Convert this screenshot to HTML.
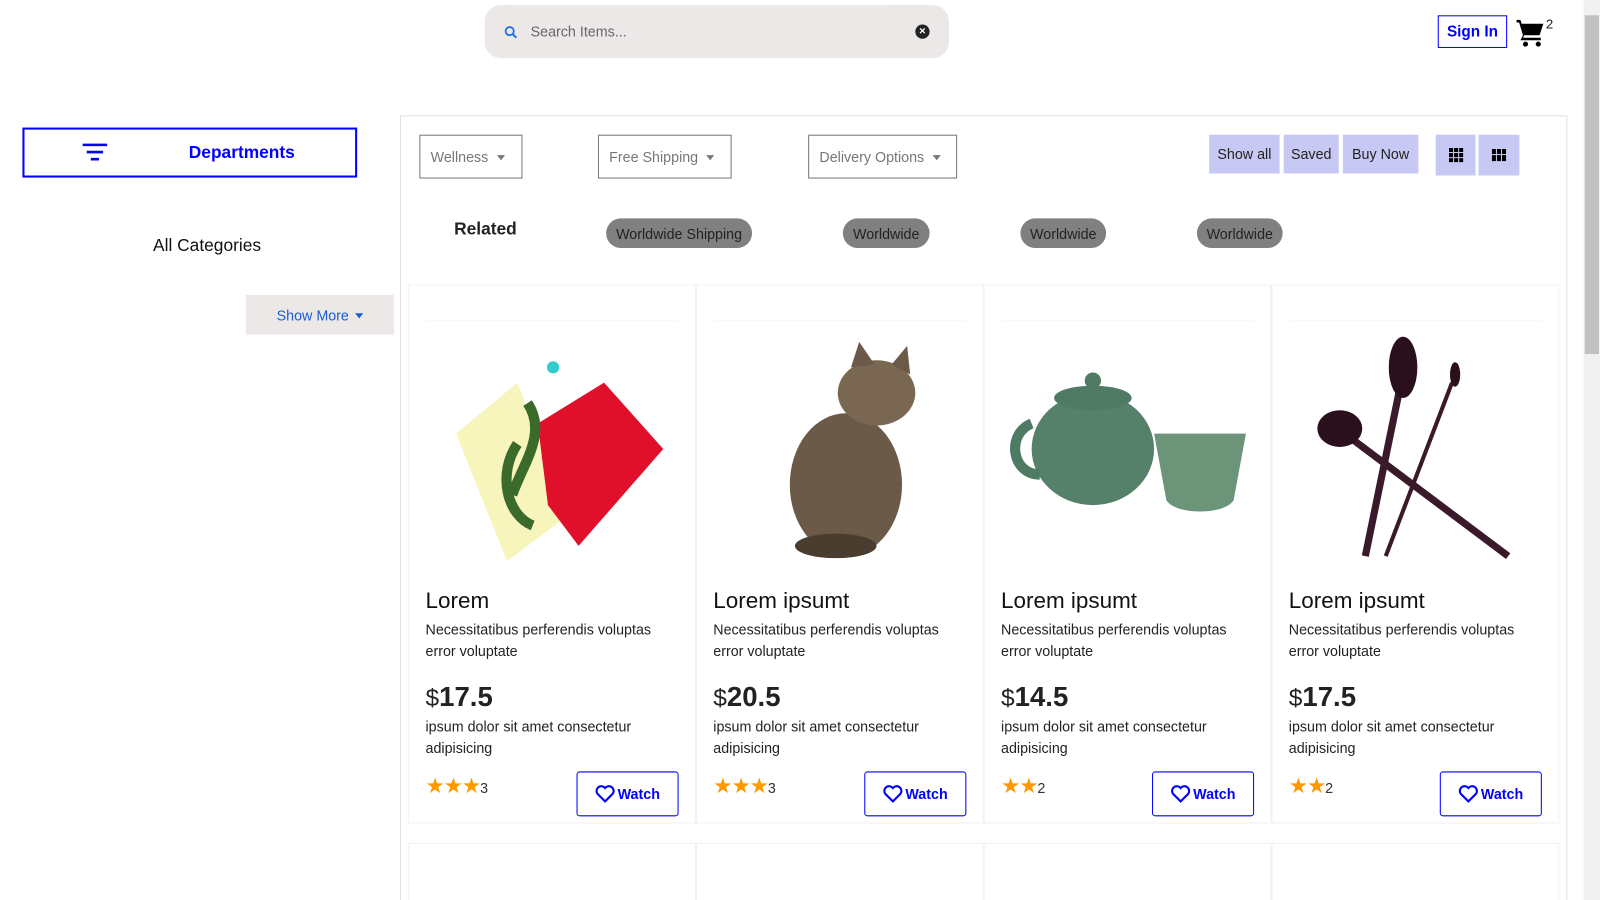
<!DOCTYPE html>
<html><head><meta charset="utf-8"><style>
*{box-sizing:border-box;margin:0;padding:0}
body{width:1600px;height:900px;overflow:hidden;background:#fff;font-family:"Liberation Sans",sans-serif;color:#222;position:relative}
#wrap{position:absolute;left:0;top:0;width:1568px;height:882px;overflow:hidden;transform:scale(1.020408);transform-origin:0 0}
.abs{position:absolute}
.search{left:475px;top:5px;width:455px;height:52px;background:#ece8e7;border-radius:16px}
.sel{top:132px;height:43px;border:1px solid #777;color:#777;font-size:14px;padding:0 10px;display:flex;align-items:center}
.sel:after{content:"";border:4px solid transparent;border-top:5px solid #777;margin-left:8px;margin-top:5px}
.pb{top:132px;height:38px;background:#c8c8f4;font-size:14px;display:flex;align-items:center;justify-content:center;color:#222}
.chip{top:214px;height:29px;background:#808080;border-radius:15px;font-size:14px;color:#222;display:flex;align-items:center;justify-content:center}
.card{width:282px;height:528px;border:1px solid #f6eef0;top:279px}
.card .img{position:absolute;left:16px;top:34px;width:248px;height:248px;overflow:hidden;border-top:1px solid #f3f3f3}
.card h3{position:absolute;left:16px;top:296px;font-size:22px;font-weight:normal;color:#111}
.card .d{position:absolute;left:16px;top:327px;font-size:14px;line-height:21px;width:240px;color:#222}
.card .p{position:absolute;left:16px;top:388px;font-size:27px;font-weight:bold}
.card .p span{font-weight:normal;font-size:24px}
.card .d2{position:absolute;left:16px;top:422px;font-size:14px;line-height:21px;width:240px}
.card .st{position:absolute;left:16px;top:478px;color:#f90;font-size:21px;letter-spacing:-1px}
.card .st b{font-weight:normal;color:#333;font-size:14px;letter-spacing:0}
.card .w{position:absolute;left:164px;top:476px;width:100px;height:44px;border:1.5px solid #00f;border-radius:3px;color:#00f;font-size:14px;font-weight:bold;display:flex;align-items:center;justify-content:center;gap:2px}
.card2{width:282px;height:120px;border:1px solid #f6eef0;top:826px}
</style></head><body><div id="wrap">
<div class="abs search">
<svg class="abs" style="left:19px;top:20px" width="14" height="14" viewBox="0 0 14 14"><circle cx="5.5" cy="5.5" r="4" fill="none" stroke="#1a73e8" stroke-width="1.8"/><path d="M8.5 8.5L12 12" stroke="#1a73e8" stroke-width="2"/></svg>
<div class="abs" style="left:45px;top:18px;font-size:14px;color:#666">Search Items...</div>
<div class="abs" style="left:422px;top:19px;width:14px;height:14px;border-radius:7px;background:#222;color:#fff;font-size:11px;line-height:14px;text-align:center;font-weight:bold">×</div>
</div>
<div class="abs" style="left:1409px;top:15px;width:68px;height:32px;border:1.5px solid #00f;color:#00f;font-weight:bold;font-size:15px;display:flex;align-items:center;justify-content:center">Sign In</div>
<svg class="abs" style="left:1485px;top:17px" width="30" height="30" viewBox="0 0 24 24"><path d="M1 2h3l1 3h17l-3 9H7l-1 2h14v2H4l2-4L3 4H1z" fill="#000"/><circle cx="8" cy="21" r="2" fill="#000"/><circle cx="18" cy="21" r="2" fill="#000"/></svg>
<div class="abs" style="left:1515px;top:16px;font-size:13px">2</div>

<div class="abs" style="left:22px;top:125px;width:328px;height:49px;border:2px solid #00f"></div>
<svg class="abs" style="left:80px;top:140px" width="26" height="20"><path d="M1 2h24M5 9h16M9 16h8" stroke="#00f" stroke-width="2.5"/></svg>
<div class="abs" style="left:185px;top:140px;font-size:17px;color:#00f;font-weight:bold">Departments</div>
<div class="abs" style="left:150px;top:231px;font-size:17px;color:#111">All Categories</div>
<div class="abs" style="left:241px;top:289px;width:145px;height:39px;background:#ece8e7;color:#1a5bd4;font-size:14px;display:flex;align-items:center;justify-content:center">Show More <span style="margin-left:6px;border:4px solid transparent;border-top:5px solid #1a5bd4;margin-top:5px"></span></div>

<div class="abs" style="left:392px;top:113px;width:1144px;height:800px;border:1px solid #e0e0e0"></div>
<div class="abs sel" style="left:411px;width:101px">Wellness</div>
<div class="abs sel" style="left:586px;width:131px">Free Shipping</div>
<div class="abs sel" style="left:792px;width:146px">Delivery Options</div>
<div class="abs pb" style="left:1185px;width:69px">Show all</div>
<div class="abs pb" style="left:1258px;width:54px">Saved</div>
<div class="abs pb" style="left:1316px;width:74px">Buy Now</div>
<div class="abs pb" style="left:1407px;width:39px;height:40px"><svg width="14" height="14"><g fill="#000"><rect x="0" y="0" width="4" height="4"/><rect x="5" y="0" width="4" height="4"/><rect x="10" y="0" width="4" height="4"/><rect x="0" y="5" width="4" height="4"/><rect x="5" y="5" width="4" height="4"/><rect x="10" y="5" width="4" height="4"/><rect x="0" y="10" width="4" height="4"/><rect x="5" y="10" width="4" height="4"/><rect x="10" y="10" width="4" height="4"/></g></svg></div>
<div class="abs pb" style="left:1449px;width:40px;height:40px"><svg width="14" height="12"><g fill="#000"><rect x="0" y="0" width="4" height="5"/><rect x="5" y="0" width="4" height="5"/><rect x="10" y="0" width="4" height="5"/><rect x="0" y="6" width="4" height="6"/><rect x="5" y="6" width="4" height="6"/><rect x="10" y="6" width="4" height="6"/></g></svg></div>
<div class="abs" style="left:445px;top:215px;font-size:17px;font-weight:bold;color:#222">Related</div>
<div class="abs chip" style="left:594px;width:143px">Worldwide Shipping</div>
<div class="abs chip" style="left:826px;width:85px">Worldwide</div>
<div class="abs chip" style="left:1000px;width:84px">Worldwide</div>
<div class="abs chip" style="left:1173px;width:84px">Worldwide</div>

<div class="abs card" style="left:400px"><div class="img"><svg width="248" height="248"><path d="M30 110 L90 60 L140 190 L80 235 Z" fill="#f4f0a0" opacity=".7"/><path d="M110 100 L175 60 L233 125 L150 220 L120 180 Z" fill="#e0102a"/><path d="M90 120 C70 150 80 190 105 200 M100 80 C120 110 95 140 85 170" stroke="#3a6b2a" stroke-width="10" fill="none"/><circle cx="125" cy="45" r="6" fill="#3cc"/></svg></div><h3>Lorem</h3><div class="d">Necessitatibus perferendis voluptas error voluptate</div><div class="p"><span>$</span>17.5</div><div class="d2">ipsum dolor sit amet consectetur adipisicing</div><div class="st">★★★<b>3</b></div><div class="w"><svg width="20" height="18" viewBox="0 0 24 22"><path d="M12 20L3 11a5 5 0 0 1 9-7 5 5 0 0 1 9 7z" fill="none" stroke="#00f" stroke-width="2.5"/></svg>Watch</div></div>
<div class="abs card" style="left:682px"><div class="img"><svg width="248" height="248"><ellipse cx="130" cy="160" rx="55" ry="70" fill="#6b5a48"/><ellipse cx="160" cy="70" rx="38" ry="32" fill="#7a6752"/><path d="M135 45l8-25 15 22zM175 42l15-18 3 28z" fill="#6b5a48"/><ellipse cx="120" cy="220" rx="40" ry="12" fill="#4a3d30"/></svg></div><h3>Lorem ipsumt</h3><div class="d">Necessitatibus perferendis voluptas error voluptate</div><div class="p"><span>$</span>20.5</div><div class="d2">ipsum dolor sit amet consectetur adipisicing</div><div class="st">★★★<b>3</b></div><div class="w"><svg width="20" height="18" viewBox="0 0 24 22"><path d="M12 20L3 11a5 5 0 0 1 9-7 5 5 0 0 1 9 7z" fill="none" stroke="#00f" stroke-width="2.5"/></svg>Watch</div></div>
<div class="abs card" style="left:964px"><div class="img"><svg width="248" height="248"><ellipse cx="90" cy="125" rx="60" ry="55" fill="#55806a"/><ellipse cx="90" cy="75" rx="38" ry="12" fill="#4f7a63"/><circle cx="90" cy="58" r="8" fill="#4f7a63"/><path d="M30 100 C5 110 10 150 38 150" stroke="#4f7a63" stroke-width="10" fill="none"/><path d="M150 110 L240 110 L228 175 C220 190 170 190 162 175 Z" fill="#6b9478"/></svg></div><h3>Lorem ipsumt</h3><div class="d">Necessitatibus perferendis voluptas error voluptate</div><div class="p"><span>$</span>14.5</div><div class="d2">ipsum dolor sit amet consectetur adipisicing</div><div class="st">★★<b>2</b></div><div class="w"><svg width="20" height="18" viewBox="0 0 24 22"><path d="M12 20L3 11a5 5 0 0 1 9-7 5 5 0 0 1 9 7z" fill="none" stroke="#00f" stroke-width="2.5"/></svg>Watch</div></div>
<div class="abs card" style="left:1246px"><div class="img"><svg width="248" height="248"><path d="M110 60 L75 230" stroke="#3a1a2a" stroke-width="7"/><ellipse cx="112" cy="45" rx="14" ry="30" fill="#2a0f1c"/><path d="M55 110 L215 230" stroke="#3a1a2a" stroke-width="7"/><ellipse cx="50" cy="105" rx="22" ry="18" fill="#2a0f1c"/><path d="M160 60 L95 230" stroke="#3a1a2a" stroke-width="4"/><ellipse cx="163" cy="52" rx="5" ry="12" fill="#2a0f1c"/></svg></div><h3>Lorem ipsumt</h3><div class="d">Necessitatibus perferendis voluptas error voluptate</div><div class="p"><span>$</span>17.5</div><div class="d2">ipsum dolor sit amet consectetur adipisicing</div><div class="st">★★<b>2</b></div><div class="w"><svg width="20" height="18" viewBox="0 0 24 22"><path d="M12 20L3 11a5 5 0 0 1 9-7 5 5 0 0 1 9 7z" fill="none" stroke="#00f" stroke-width="2.5"/></svg>Watch</div></div>
<div class="abs card2" style="left:400px"></div><div class="abs card2" style="left:682px"></div><div class="abs card2" style="left:964px"></div><div class="abs card2" style="left:1246px"></div>
<div class="abs" style="left:1552px;top:0;width:16px;height:882px;background:#f1f1f1"></div>
<div class="abs" style="left:1553px;top:15px;width:14px;height:332px;background:#c1c1c1"></div>
</div></body></html>
